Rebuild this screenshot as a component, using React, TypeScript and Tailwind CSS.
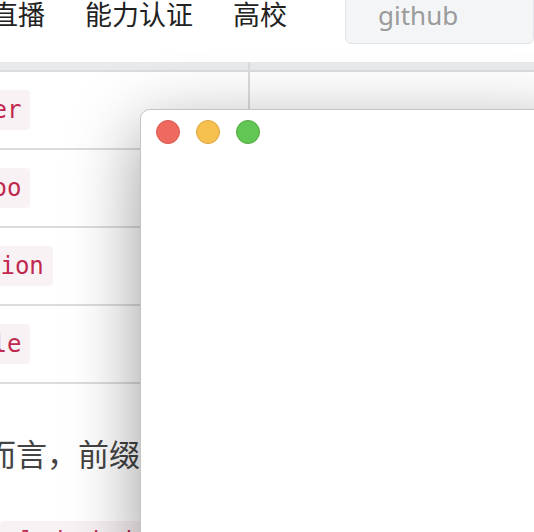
import React from "react";

const cjk = { fontFamily: '"Noto Sans CJK SC", "Noto Sans", sans-serif' };
const mono = { fontFamily: '"DejaVu Sans Mono", "Liberation Mono", monospace' };

function Chip({ text, ml }: { text: string; ml: string }) {
  return (
    <span
      className={`inline-block shrink-0 rounded-[4px] bg-[#f9f2f4] px-[9px] py-[2px] text-[24px] leading-[36px] text-[#c0284f] ${ml}`}
      style={mono}
    >
      {text}
    </span>
  );
}

function Row({ children }: { children: React.ReactNode }) {
  return (
    <div className="flex h-[78px] border-t-2 border-[#dcdcdc]">
      <div className="flex w-[250px] shrink-0 items-center overflow-hidden border-r-2 border-[#dcdcdc]">
        {children}
      </div>
      <div className="flex-1" />
    </div>
  );
}

export default function App() {
  return (
    <div className="relative h-[532px] w-[534px] overflow-hidden bg-white">
      {/* header */}
      <div className="flex h-[62px] items-start">
        <nav
          className="ml-[-9px] flex shrink-0 gap-[40px] whitespace-nowrap text-[27px] leading-[27px] text-[#222222]"
          style={cjk}
        >
          <span>直播</span>
          <span>能力认证</span>
          <span>高校</span>
        </nav>
        <div className="ml-[58px] mt-[-14px] flex h-[58px] flex-1 items-center rounded-[6px] border border-[#e1e4e8] bg-[#f4f5f7] pl-[32px]">
          <span
            className="text-[26px] leading-[35px] text-[#9b9b9b]"
            style={{ fontFamily: '"Noto Sans", sans-serif' }}
          >
            github
          </span>
        </div>
      </div>

      {/* table head band */}
      <div className="flex h-[8px] bg-[#e8ebee]">
        <div className="w-[250px] shrink-0 border-r-2 border-[#dcdcdc]" />
        <div className="flex-1" />
      </div>

      {/* table */}
      <div className="border-b-2 border-[#dcdcdc]">
        <Row>
          <Chip text="der" ml="ml-[-31px]" />
        </Row>
        <Row>
          <Chip text="foo" ml="ml-[-31px]" />
        </Row>
        <Row>
          <Chip text="tion" ml="ml-[-23px]" />
        </Row>
        <Row>
          <Chip text="ble" ml="ml-[-31px]" />
        </Row>
      </div>

      {/* paragraph */}
      <p
        className="ml-[-15px] mt-[53px] whitespace-nowrap text-[31px] leading-[31px] text-[#444444]"
        style={cjk}
      >
        而言，前缀的作用是区分
      </p>

      <div className="mt-[53px] flex">
        <span
          className="inline-block whitespace-nowrap rounded-[4px] bg-[#f9f2f4] px-[6px] py-[2px] text-[24px] leading-[36px] text-[#c0284f]"
          style={mono}
        >
          _lodash.isObject()
        </span>
      </div>

      {/* overlaid window */}
      <div className="absolute bottom-[-40px] left-[140px] right-[-40px] top-[109px] rounded-tl-[10px] border border-[#c4c4c4] bg-white shadow-[0_20px_70px_rgba(0,0,0,0.4)]">
        <div className="flex gap-[16px] pl-[15px] pt-[10px]">
          <span className="h-[24px] w-[24px] rounded-full border border-[#d9574b] bg-[#ee6a5f]" />
          <span className="h-[24px] w-[24px] rounded-full border border-[#dca53f] bg-[#f6c04f]" />
          <span className="h-[24px] w-[24px] rounded-full border border-[#51a83f] bg-[#62c655]" />
        </div>
      </div>
    </div>
  );
}
